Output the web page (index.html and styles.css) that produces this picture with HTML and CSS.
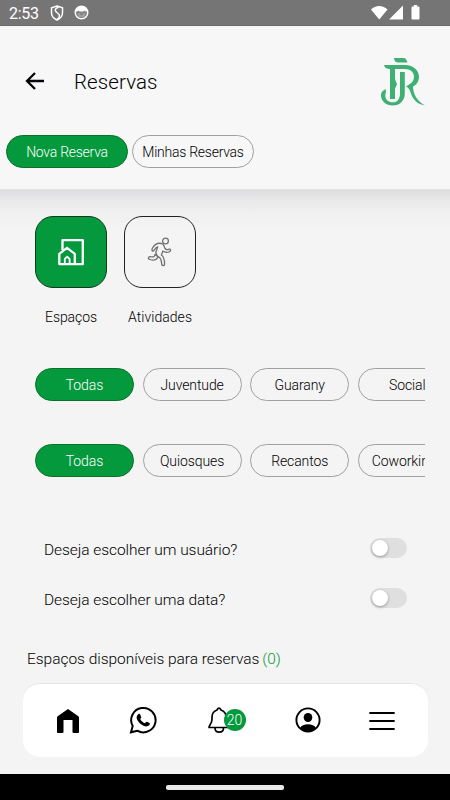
FILE: index.html
```html
<!DOCTYPE html>
<html lang="pt-BR">
<head>
<meta charset="utf-8">
<title>Reservas</title>
<link rel="stylesheet" href="styles.css">
</head>
<body>
<div class="app">
  <div class="status">
    <span class="clock">2:53</span>
    <svg class="shield" width="14" height="16" viewBox="0 0 14 16" fill="none" stroke="#fff" stroke-width="1.5"><path d="M7 1 12.5 2.8V8c0 3-2.300 5.600-5.500 7C3.800 13.600 1.500 11 1.500 8V2.800z"/><path d="M8.500 2C4 4 4.500 6 7.500 8s2.500 4.500-.5 6.500"/></svg>
    <svg width="15" height="15" viewBox="0 0 15 15"><circle cx="7.500" cy="7.500" r="6.300" fill="#858585" stroke="#fff" stroke-width="1.400"/><path d="M1.500 5.500C3 0 12 0 13.500 5.500L12 7 11 5.500 9 6.500H6L4 5.500 3 7z" fill="#fff"/><path d="M4 9h2M9 9h2M4 11h7" stroke="#b5b5b5"/></svg>
    <svg class="signals" width="51" height="16" viewBox="0 0 51 16" fill="#fff"><path d="M1 4.500C5.500-.2 13-.2 17.500 4.500L9.200 14.500zM19 14.500 33 .5v14zM42.500 1.500h1.300V0h3.400v1.500h1.300q1 0 1 1v11q0 1-1 1h-6q-1 0-1-1v-11q0-1 1-1z"/></svg>
  </div>

  <header class="header">
    <div class="titlebar">
      <svg width="20" height="20" viewBox="0 0 20 20" fill="none" stroke="#050509" stroke-width="2.300"><path d="M10 2 2 10l8 8M2 10h17"/></svg>
      <h1 class="title">Reservas</h1>
      <svg class="logo" width="46" height="50" viewBox="0 0 46 50">
        <g fill="#3fb074">
          <path d="M14 1h10q2 0 3.500 4.500H18Q14.500 5.500 14 1z"/>
          <path d="M4 8h21c9 0 14 6 14 11.500 0 5-2.500 8.500-6 10C33 37 37 44 45 48.500 34 47 31.500 38 30.500 35c-1-3-2.500-4.500-4.500-5.500l3.500-2.300c3-1.600 4.500-4.200 4.500-7.700 0-4.500-4-7.500-9-7.500H15V22l2 5.500-2 4V42h-5V12C6.500 12 4.500 10.500 4 8z"/>
          <path d="M20 15h4.800v21.500C24.800 44 19.500 48.500 13 48.500 5.500 48.500 1 43.500 1 38.500 1 35 3.500 32.500 6.200 32.500L5.500 37c-1.200 5 2.500 8.300 7.500 8.300 4.500 0 7-3.500 7-8.800z"/>
        </g>
      </svg>
    </div>
    <div class="tabs">
      <span class="pill tab active">Nova Reserva</span>
      <span class="pill tab">Minhas Reservas</span>
    </div>
  </header>

  <main class="main">
    <div class="tiles">
      <div class="tile">
        <div class="box active"><svg width="28" height="28" viewBox="0 0 28 28" fill="none" stroke="#fff" stroke-width="2.300" stroke-linejoin="round"><path d="M5.500 12V2.200h20.300v24H18"/><path d="M2.300 26.200V15.800L10 9.800l7.800 6v10.400z"/><path d="M7.800 26v-5l2.400-2.300 2.400 2.300v5" stroke-width="1.800"/></svg></div>
        <span class="espacos">Espaços</span>
      </div>
      <div class="tile">
        <div class="box"><svg width="26" height="30" viewBox="0 0 26 30" fill="none" stroke="#717171" stroke-width="1.300" stroke-linejoin="round"><circle cx="18.500" cy="4" r="2.900"/><path d="M14.500 6.500C11 5.600 8 7 5.500 11c-.8 1.600-.7 3.300.6 3 1.500-.5 1.600-3.200 4.600-4.200L9 15c-.8 2.700.8 3.500 3.500 5.500 2 1.500 2 5.200 2.300 7 .4 1.700 2.800 1.400 2.800-.3 0-4.200-.8-7.400-3.200-9.200l1.500-4c1.500 1 4 2.200 6.500.7 2.200-1 1-3.200-.9-2.300-2 1-4-.7-4.300-3-.3-1.300-1-2.300-2.700-2.900zM8 17.500c-.4 2.300-1.500 2.800-4 2.300-2.500-.5-3.700 2-1.300 2.700 4.300 1.300 7.200.3 8.300-2.700z"/></svg></div>
        <span class="atividades">Atividades</span>
      </div>
    </div>

    <div class="chips">
      <span class="pill chip active">Todas</span>
      <span class="pill chip">Juventude</span>
      <span class="pill chip">Guarany</span>
      <span class="pill chip">Social</span>
    </div>
    <div class="chips second">
      <span class="pill chip active">Todas</span>
      <span class="pill chip">Quiosques</span>
      <span class="pill chip">Recantos</span>
      <span class="pill chip wide">Coworking</span>
    </div>

    <div class="options">
      <div class="option"><span>Deseja escolher um usuário?</span><span class="switch"></span></div>
      <div class="option"><span>Deseja escolher uma data?</span><span class="switch"></span></div>
    </div>
    <p class="available">Espaços disponíveis para reservas<span class="count">(0)</span></p>

    <nav class="dock">
      <svg width="24" height="26" viewBox="0 0 24 26"><path d="M1 9.500Q1 8.500 2 8L12 1l10 7q1 .5 1 1.500V24q0 1-1 1h-4.500q-1 0-1-1V12h-9v12q0 1-1 1H2q-1 0-1-1z" fill="#000"/></svg>
      <svg class="whats" width="28" height="28" viewBox="0 0 28 28"><path d="M2 26.300 3.700 20A12.200 12.200 0 1 1 8.300 24.700z" fill="none" stroke="#000" stroke-width="2"/><path d="M9.200 8.300c.7-.7 1.700-.6 2 .1l1 2.500c.3.700-.7 1.500-1 2 1 2 2.600 3.500 4.700 4.400.7-.5 1.400-1.700 2.100-1.500l2.500 1.200c.8.400.2 2-.6 2.600-2.200 1.600-5.200.7-8.200-1.600-3-2.400-6-6.700-2.500-9.700z" fill="#000"/></svg>
      <div class="bell">
        <svg width="26" height="28" viewBox="0 0 26 28" fill="none" stroke="#000" stroke-width="1.700" stroke-linejoin="round"><path d="M2 21.500c-.5-1.500 3-4 3-8V11c0-4 2.200-6 5-7q2-3.700 4 0c3 1 5 3.500 5 7v3c0 3.500 3.500 6 3 7.500z"/><path d="M8 22c0 5.500 8.500 5.500 8.500 0"/></svg>
        <span class="badge">20</span>
      </div>
      <svg class="user" width="26" height="26" viewBox="0 0 26 26"><circle cx="13" cy="13" r="11.600" fill="none" stroke="#000" stroke-width="1.900"/><ellipse cx="13" cy="10.500" rx="4.300" ry="4.600" fill="#000"/><path d="M5 21c2.500-5 13.500-5 16 0-4 5-12 5-16 0z" fill="#000"/></svg>
      <svg class="menu" width="26" height="20" viewBox="0 0 26 20" stroke="#000" stroke-width="1.800" stroke-linecap="round"><path d="M1 2h24M1 10h24M1 18h24"/></svg>
    </nav>
  </main>
  <div class="gesture"><span class="handle"></span></div>
</div>
</body>
</html>
```
FILE: styles.css
```css
* { box-sizing: border-box; }
body { margin: 0; font-family: Roboto, "Liberation Sans", sans-serif; font-weight: 300; color: #000; }
svg { display: block; flex: none; }
.app { width: 450px; height: 800px; display: flex; flex-direction: column; overflow: hidden; background: #f4f4f4; }

.status { height: 26px; background: #757575; color: #fff; display: flex; align-items: center; padding: 0 29px 0 9px; border-bottom: 1px solid #696969; }
.clock { font-size: 16px; font-weight: 400; width: 41px; letter-spacing: -.3px; padding-top: 2px; }
.shield { margin-right: 10px; }
.signals { margin-left: auto; }

.header { height: 164px; flex: none; background: #f7f7f7; border-bottom: 1px solid #e2e2e3; padding: 30px 5px 0 6px; }
.titlebar { display: flex; align-items: center; height: 50px; padding: 0 19px 0 19px; }
.title { margin: 0 0 0 29px; font-size: 20.500px; font-weight: 300; letter-spacing: .1px; padding-top: 2px; }
.logo { margin-left: auto; margin-top: 1px; }
.tabs { display: flex; gap: 4px; margin-top: 29px; }

.pill { display: flex; flex: none; align-items: center; justify-content: center; height: 33px; border: 1px solid #a0a0a0; border-radius: 17px; font-size: 14px; letter-spacing: -.1px; white-space: nowrap; }
.tab { width: 122px; letter-spacing: -.25px; }
.active { background: #04993d; border-color: #0b7026; color: #fff; }

.main { height: 584px; flex: none; padding: 26px 22px 0 23px; background: linear-gradient(#dedee0 0, #e8e8e9 10px, #f0f0f0 22px, #f4f4f4 40px); }
.tiles { display: flex; gap: 17px; padding-left: 12px; height: 152px; }
.tile { width: 72px; display: flex; flex-direction: column; align-items: center; font-size: 14px; white-space: nowrap; }
.box { width: 72px; height: 72px; border: 1px solid #222; border-radius: 18px; display: flex; align-items: center; justify-content: center; margin-bottom: 21px; }
.box.active { border-color: #123b1e; }
.espacos { letter-spacing: -.1px; }
.atividades { letter-spacing: .05px; }

.chips { display: flex; gap: 8.600px; width: 390px; margin-left: 12px; overflow: hidden; }
.second { margin-top: 43px; }
.chip { width: 99px; }
.wide { justify-content: flex-start; padding-left: 13px; }

.options { display: flex; flex-direction: column; gap: 30px; margin-top: 61px; padding: 0 21px; }
.option { display: flex; align-items: center; justify-content: space-between; height: 20px; font-size: 15.500px; letter-spacing: -.06px; }
.option span:first-child { padding-top: 3px; }
.switch { width: 37px; height: 20px; border-radius: 10px; background: #dfdfdf; padding: 2px; }
.switch::before { content: ""; display: block; width: 16px; height: 16px; border-radius: 50%; background: #fff; box-shadow: 0 1px 3px rgba(0, 0, 0, .35); }
.available { margin: 41px 0 0 4px; height: 20px; line-height: 20px; font-size: 15.500px; letter-spacing: -.03px; white-space: nowrap; }
.count { color: #0c9a35; margin-left: 3px; }

.dock { height: 74px; margin-top: 14px; background: #fff; border-top: 1px solid #e6e6e6; border-radius: 17px; display: flex; align-items: center; padding: 0 33px; }
.whats { margin-left: 49px; margin-top: -2px; }
.bell { position: relative; width: 38px; margin-left: 50px; margin-top: -1px; }
.badge { position: absolute; left: 16.500px; top: 3px; width: 22px; height: 22px; border-radius: 50%; background: #04993d; color: #fff; font-size: 14px; line-height: 22px; text-align: center; }
.user { margin-left: 49.500px; margin-top: -1px; }
.menu { margin-left: auto; }
.gesture { height: 26px; background: #000; display: flex; align-items: center; justify-content: center; }
.handle { width: 118px; height: 5px; border-radius: 2px; background: #e9e9e9; }
```
